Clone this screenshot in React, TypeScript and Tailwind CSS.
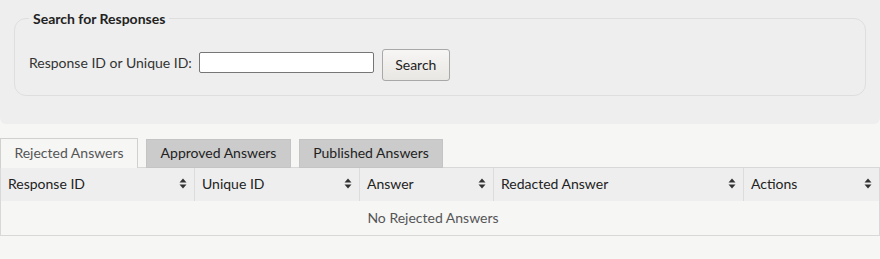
import React from "react";

const SortIcon = () => (
  <svg width="8" height="11" viewBox="0 0 8 11" className="shrink-0">
    <path d="M4 0.5 L7.5 4.5 L0.5 4.5 Z" fill="#333" />
    <path d="M4 10.5 L7.5 6.5 L0.5 6.5 Z" fill="#333" />
  </svg>
);

const cols = [
  { label: "Response ID", w: "w-[194px]" },
  { label: "Unique ID", w: "w-[165px]" },
  { label: "Answer", w: "w-[134px]" },
  { label: "Redacted Answer", w: "w-[250px]" },
  { label: "Actions", w: "flex-1" },
];

export default function App() {
  return (
    <div
      className="w-[880px] h-[259px] bg-[#f6f6f5] text-[14px]"
      style={{ fontFamily: "Lato, 'Open Sans', sans-serif" }}
    >
      <div className="bg-[#eeeeee] rounded-b-[6px] h-[124px] pt-[9px] px-[14px]">
        <fieldset className="border border-[#dedede] rounded-[12px] h-[87px] px-[14px] m-0">
          <legend className="font-bold text-[#222] px-[4px] text-[14px] leading-[19px]">
            Search for Responses
          </legend>
          <div className="flex items-start mt-[21px]">
            <span className="text-[#333] mt-[4px] leading-[20px]">Response ID or Unique ID:</span>
            <input
              type="text"
              className="ml-[7px] mt-[3px] w-[175px] h-[21px] bg-white border border-[#767676] rounded-[2px]"
            />
            <button className="ml-[8px] h-[32px] w-[68px] border border-[#a8a8a8] rounded-[3px] bg-gradient-to-b from-[#f7f6f4] to-[#e9e7e3] text-[#222] pb-[2px]">
              Search
            </button>
          </div>
        </fieldset>
      </div>
      <div className="mt-[14px] flex items-end h-[30px] relative z-10">
        <div className="w-[138px] h-[30px] border border-b-0 border-[#d0d0d0] bg-[#f6f6f5] text-[#555] flex items-center justify-center pb-[2px]">
          Rejected Answers
        </div>
        <div className="ml-[8px] w-[145px] h-[29px] border border-[#c4c4c4] bg-[#cbcbcb] text-[#222] flex items-center justify-center pb-[2px]">
          Approved Answers
        </div>
        <div className="ml-[8px] w-[144px] h-[29px] border border-[#c4c4c4] bg-[#cbcbcb] text-[#222] flex items-center justify-center pb-[2px]">
          Published Answers
        </div>
      </div>
      <div className="border border-[#d8d8d8] -mt-[1px]">
        <div className="flex bg-[#eeeeee] h-[33px]">
          {cols.map((c, i) => (
            <div
              key={c.label}
              className={`${c.w} flex items-center justify-between pl-[7px] pr-[7px] pb-[2px] ${
                i < cols.length - 1 ? "border-r border-[#dcdcdc]" : ""
              } text-[#222]`}
            >
              <span>{c.label}</span>
              <SortIcon />
            </div>
          ))}
        </div>
        <div className="h-[34px] flex items-center justify-center text-[#555] bg-[#f6f6f5] pr-[14px] pb-[1px]">
          No Rejected Answers
        </div>
      </div>
    </div>
  );
}
